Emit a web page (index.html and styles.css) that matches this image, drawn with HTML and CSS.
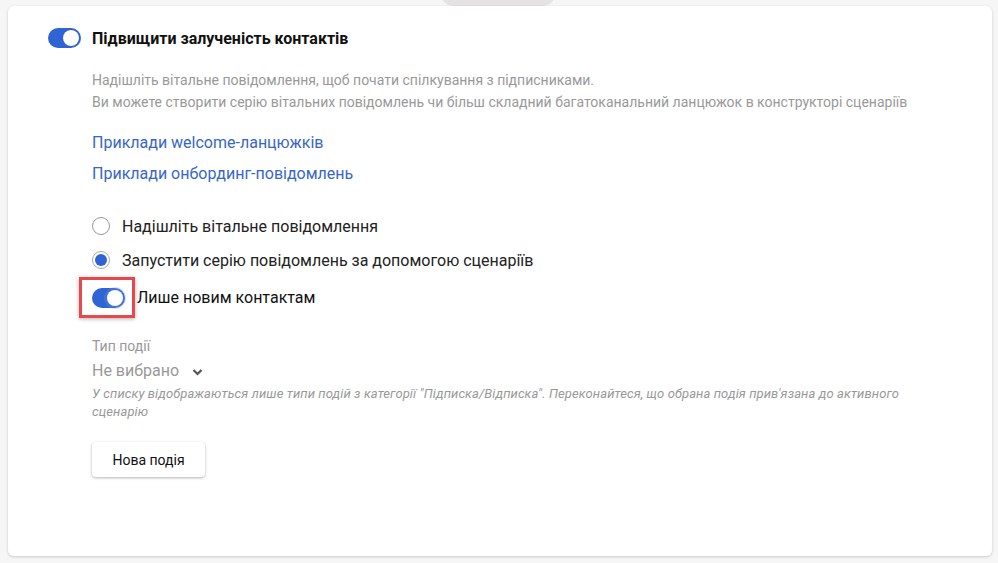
FILE: index.html
```html
<!DOCTYPE html>
<html lang="uk">
<head>
<meta charset="utf-8">
<link rel="stylesheet" href="styles.css">
</head>
<body>
<div class="tab-peek"></div>
<div class="card">
  <div class="header">
    <span class="toggle on"><span class="knob"></span></span>
    <span class="title">Підвищити залученість контактів</span>
  </div>
  <div class="body">
    <p class="desc">Надішліть вітальне повідомлення, щоб почати спілкування з підписниками.<br>Ви можете створити серію вітальних повідомлень чи більш складний багатоканальний ланцюжок в конструкторі сценаріїв</p>
    <a class="link link-first" href="#">Приклади welcome-ланцюжків</a>
    <a class="link" href="#">Приклади онбординг-повідомлень</a>
    <div class="radios">
      <label class="radio"><span class="circle"></span><span>Надішліть вітальне повідомлення</span></label>
      <label class="radio"><span class="circle checked"></span><span>Запустити серію повідомлень за допомогою сценаріїв</span></label>
    </div>
    <div class="sub-toggle">
      <span class="highlight"><span class="toggle on focus"><span class="knob"></span></span></span>
      <span class="sub-label">Лише новим контактам</span>
    </div>
    <div class="field">
      <div class="field-label">Тип події</div>
      <div class="select">Не вибрано <svg class="chev" width="11" height="8" viewBox="0 0 11 8"><path d="M1.5 2 L5.5 6 L9.5 2" fill="none" stroke="#555" stroke-width="2.2"/></svg></div>
      <div class="hint">У списку відображаються лише типи подій з категорії "Підписка/Відписка". Переконайтеся, що обрана подія прив'язана до активного сценарію</div>
    </div>
    <button class="btn">Нова подія</button>
  </div>
</div>
</body>
</html>
```
FILE: styles.css
```css
html, body {
  margin: 0;
  padding: 0;
}
body {
  background: #f6f6f6;
  font-family: Roboto, "Noto Sans", Arial, sans-serif;
  width: 998px;
  height: 563px;
  position: relative;
  overflow: hidden;
}
.tab-peek {
  position: absolute;
  left: 440px;
  top: -10px;
  width: 116px;
  height: 16px;
  background: #e5e2e4;
  border-radius: 0 0 14px 14px;
}
.card {
  position: relative;
  margin: 6px 6px 0 8px;
  height: 550px;
  box-sizing: border-box;
  background: #fff;
  border-radius: 6px;
  box-shadow: 0 1px 3px rgba(0,0,0,0.18);
  padding: 22px 0 0 40px;
}
.header {
  display: flex;
  align-items: center;
  gap: 11px;
  height: 20px;
}
.toggle {
  display: inline-block;
  position: relative;
  width: 33px;
  height: 20px;
  border-radius: 10px;
  background: #2f64d4;
  box-sizing: border-box;
}
.toggle .knob {
  position: absolute;
  right: 2px;
  top: 2px;
  width: 16px;
  height: 16px;
  border-radius: 50%;
  background: #fff;
  box-shadow: 0 0 1px rgba(0,0,0,0.3);
}
.toggle.focus .knob {
  box-shadow: 0 0 0 3px rgba(120,150,220,0.28);
}
.title {
  font-weight: 700;
  font-size: 16px;
  color: #111;
}
.body {
  padding-left: 44px;
}
.desc {
  margin: 21px 0 0 0;
  font-size: 14px;
  line-height: 22px;
  color: #999;
}
.link {
  display: block;
  font-size: 16px;
  line-height: 20px;
  color: #3766c8;
  text-decoration: none;
  margin-top: 11px;
}
.link.link-first {
  margin-top: 20px;
}
.radios {
  margin-top: 33px;
  display: flex;
  flex-direction: column;
  gap: 16px;
}
.radio {
  display: flex;
  align-items: center;
  gap: 12px;
  font-size: 16px;
  color: #222;
  height: 18px;
}
.circle {
  width: 18px;
  height: 18px;
  box-sizing: border-box;
  border: 1px solid #999;
  border-radius: 50%;
  background: #fff;
  position: relative;
}
.circle.checked {
  border-color: #aaa;
}
.circle.checked::after {
  content: "";
  position: absolute;
  left: 2px;
  top: 2px;
  width: 12px;
  height: 12px;
  border-radius: 50%;
  background: #2f64d4;
}
.sub-toggle {
  display: flex;
  align-items: center;
  margin-top: 8px;
  margin-left: -13px;
}
.highlight {
  display: inline-flex;
  align-items: center;
  width: 56px;
  height: 41px;
  box-sizing: border-box;
  border: 3px solid #e5484d;
  box-shadow: 0 1px 4px rgba(0,0,0,0.3);
  padding-left: 10px;
}
.sub-label {
  font-size: 16px;
  color: #111;
  margin-left: 2px;
}
.field {
  margin-top: 19px;
}
.field-label {
  font-size: 14px;
  color: #999;
  line-height: 18px;
}
.select {
  margin-top: 6px;
  font-size: 16px;
  color: #999;
  line-height: 20px;
  display: flex;
  align-items: center;
}
.chev {
  margin-left: 13px;
  margin-top: 2px;
}
.hint {
  margin-top: 4px;
  font-size: 13px;
  font-style: italic;
  line-height: 18px;
  color: #999;
  width: 820px;
  letter-spacing: 0.1px;
}
.btn {
  margin-top: 21px;
  width: 113px;
  height: 35px;
  background: #fff;
  border: none;
  border-radius: 4px;
  box-shadow: 0 1px 3px rgba(0,0,0,0.3);
  font-family: inherit;
  font-size: 14px;
  color: #111;
}
```
